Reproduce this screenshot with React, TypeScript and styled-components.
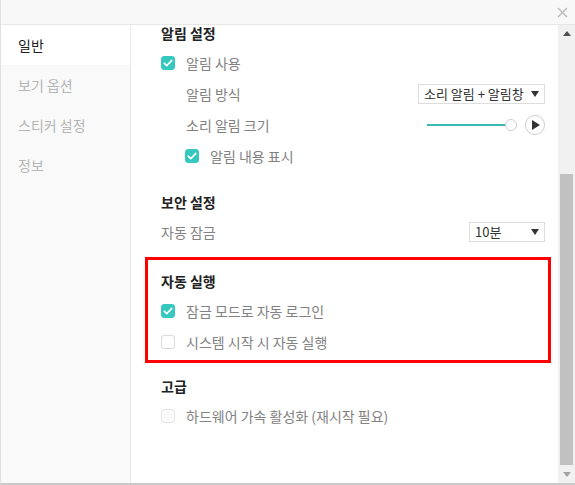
import React from "react";
import styled, { createGlobalStyle } from "styled-components";

const Global = createGlobalStyle`
  html, body { margin: 0; padding: 0; background: #fff; }
  body { font-family: "Noto Sans CJK KR", "Noto Sans", sans-serif; font-size: 14px; }
  * { box-sizing: border-box; }
`;

const TEAL = "#36c8bf";

const Window = styled.div`
  width: 575px;
  height: 485px;
  border-left: 1px solid #e0e0e0;
  border-bottom: 2px solid #c9c9c9;
  display: flex;
  flex-direction: column;
  background: #fff;
  overflow: hidden;
`;

const Header = styled.div`
  height: 25px;
  flex: none;
  background: #f8f8f8;
  border-bottom: 1px solid #e6e6e6;
  display: flex;
  justify-content: flex-end;
  align-items: center;
  padding-right: 7px;
`;

const CloseBtn = styled.button`
  border: 0;
  background: none;
  padding: 0;
  width: 11px;
  height: 11px;
  display: flex;
  cursor: pointer;
`;

const Body = styled.div`
  flex: 1;
  min-height: 0;
  display: flex;
`;

const Sidebar = styled.nav`
  width: 130px;
  flex: none;
  background: #f9f9f9;
  border-right: 1px solid #ebebeb;
  display: flex;
  flex-direction: column;
`;

const NavItem = styled.div<{ $active?: boolean }>`
  height: 40px;
  display: flex;
  align-items: center;
  padding-left: 17px;
  background: ${(p) => (p.$active ? "#fff" : "transparent")};
  color: ${(p) => (p.$active ? "#222" : "#b6b6b6")};
  font-size: 14px;
`;

const Content = styled.main`
  flex: 1;
  min-width: 0;
  padding: 0 13px 0 30px;
  display: flex;
  flex-direction: column;
`;

const Section = styled.section<{ $gap: number }>`
  margin-top: ${(p) => p.$gap}px;
  display: flex;
  flex-direction: column;
`;

const Highlight = styled(Section)`
  margin-left: -16px;
  margin-right: -6px;
  border: 3px solid #ff0000;
  padding: 13px 3px 3px 13px;
`;

const Title = styled.h3`
  margin: 0;
  font-size: 14px;
  line-height: 16px;
  font-weight: 700;
  color: #222;
`;

const Rows = styled.div`
  margin-top: 6px;
  display: flex;
  flex-direction: column;
`;

const Row = styled.div<{ $indent?: number }>`
  height: 31px;
  display: flex;
  align-items: center;
  justify-content: space-between;
  padding-left: ${(p) => p.$indent ?? 0}px;
`;

const LabelGroup = styled.label`
  display: flex;
  align-items: center;
  gap: 11px;
  color: #828282;
  font-size: 14px;
`;

const Box = styled.span<{ $checked?: boolean; $disabled?: boolean }>`
  width: 14px;
  height: 14px;
  border-radius: 3px;
  flex: none;
  display: flex;
  align-items: center;
  justify-content: center;
  background: ${(p) => (p.$checked ? TEAL : p.$disabled ? "#fbfbfb" : "#fff")};
  border: 1px solid ${(p) => (p.$checked ? TEAL : p.$disabled ? "#e6e6e6" : "#dadada")};
`;

const Select = styled.div<{ $w: number }>`
  width: ${(p) => p.$w}px;
  height: 20px;
  border: 1px solid #dcdcdc;
  display: flex;
  align-items: center;
  justify-content: space-between;
  padding: 0 5px 0 5px;
  color: #333;
  font-size: 13px;
  background: #fff;
`;

const Controls = styled.div`
  display: flex;
  align-items: center;
  gap: 8px;
`;

const Slider = styled.div`
  width: 90px;
  display: flex;
  align-items: center;
`;

const SliderFill = styled.div`
  flex: 1;
  height: 2px;
  background: #3ab9b4;
`;

const Knob = styled.div`
  width: 12px;
  height: 12px;
  border-radius: 50%;
  border: 1px solid #cfcfcf;
  background: #fff;
  margin-left: -6px;
  flex: none;
`;

const PlayBtn = styled.button`
  width: 20px;
  height: 20px;
  border-radius: 50%;
  border: 1px solid #cdcdcd;
  background: #fff;
  padding: 0 0 0 2px;
  display: flex;
  align-items: center;
  justify-content: center;
`;

const Scrollbar = styled.div`
  width: 17px;
  flex: none;
  background: #f1f1f1;
  display: flex;
  flex-direction: column;
`;

const ScrollBtn = styled.div`
  height: 17px;
  flex: none;
  display: flex;
  align-items: center;
  justify-content: center;
`;

const Track = styled.div`
  flex: 1;
  display: flex;
  flex-direction: column;
  justify-content: flex-end;
  padding: 0 2px 1px 2px;
`;

const Thumb = styled.div`
  height: 291px;
  background: #c1c1c1;
`;

const Check = () => (
  <svg width="10" height="8" viewBox="0 0 10 8">
    <path d="M1.2 4.2 L3.8 6.6 L8.8 1.4" fill="none" stroke="#fff" strokeWidth="1.6" strokeLinecap="round" strokeLinejoin="round" />
  </svg>
);

const CheckBox = ({ checked, disabled }: { checked?: boolean; disabled?: boolean }) => (
  <Box $checked={checked} $disabled={disabled}>{checked && <Check />}</Box>
);

const Caret = () => (
  <svg width="8" height="6" viewBox="0 0 8 6">
    <path d="M0 0 H8 L4 6 Z" fill="#333" />
  </svg>
);

const Arrow = ({ up, color }: { up?: boolean; color: string }) => (
  <svg width="8" height="5" viewBox="0 0 8 5">
    <path d={up ? "M0 5 H8 L4 0 Z" : "M0 0 H8 L4 5 Z"} fill={color} />
  </svg>
);

export default function App() {
  return (
    <>
      <Global />
      <Window>
        <Header>
          <CloseBtn aria-label="닫기">
            <svg width="11" height="11" viewBox="0 0 11 11">
              <path d="M1 1 L10 10 M10 1 L1 10" stroke="#bdbdbd" strokeWidth="1.5" />
            </svg>
          </CloseBtn>
        </Header>
        <Body>
          <Sidebar>
            <NavItem $active>일반</NavItem>
            <NavItem>보기 옵션</NavItem>
            <NavItem>스티커 설정</NavItem>
            <NavItem>정보</NavItem>
          </Sidebar>
          <Content>
            <Section $gap={0}>
              <Title>알림 설정</Title>
              <Rows>
                <Row>
                  <LabelGroup><CheckBox checked />알림 사용</LabelGroup>
                </Row>
                <Row $indent={25}>
                  <LabelGroup>알림 방식</LabelGroup>
                  <Select $w={127}>
                    <span>소리 알림 + 알림창</span>
                    <Caret />
                  </Select>
                </Row>
                <Row $indent={25}>
                  <LabelGroup>소리 알림 크기</LabelGroup>
                  <Controls>
                    <Slider>
                      <SliderFill />
                      <Knob />
                    </Slider>
                    <PlayBtn aria-label="재생">
                      <svg width="8" height="10" viewBox="0 0 8 10">
                        <path d="M0 0 L8 5 L0 10 Z" fill="#333" />
                      </svg>
                    </PlayBtn>
                  </Controls>
                </Row>
                <Row $indent={24}>
                  <LabelGroup><CheckBox checked />알림 내용 표시</LabelGroup>
                </Row>
              </Rows>
            </Section>

            <Section $gap={23}>
              <Title>보안 설정</Title>
              <Rows>
                <Row>
                  <LabelGroup>자동 잠금</LabelGroup>
                  <Select $w={76}>
                    <span>10분</span>
                    <Caret />
                  </Select>
                </Row>
              </Rows>
            </Section>

            <Highlight $gap={10}>
              <Title>자동 실행</Title>
              <Rows>
                <Row>
                  <LabelGroup><CheckBox checked />잠금 모드로 자동 로그인</LabelGroup>
                </Row>
                <Row>
                  <LabelGroup><CheckBox />시스템 시작 시 자동 실행</LabelGroup>
                </Row>
              </Rows>
            </Highlight>

            <Section $gap={15}>
              <Title>고급</Title>
              <Rows>
                <Row>
                  <LabelGroup><CheckBox disabled />하드웨어 가속 활성화 (재시작 필요)</LabelGroup>
                </Row>
              </Rows>
            </Section>
          </Content>
          <Scrollbar>
            <ScrollBtn><Arrow up color="#505050" /></ScrollBtn>
            <Track><Thumb /></Track>
            <ScrollBtn><Arrow color="#a3a3a3" /></ScrollBtn>
          </Scrollbar>
        </Body>
      </Window>
    </>
  );
}
